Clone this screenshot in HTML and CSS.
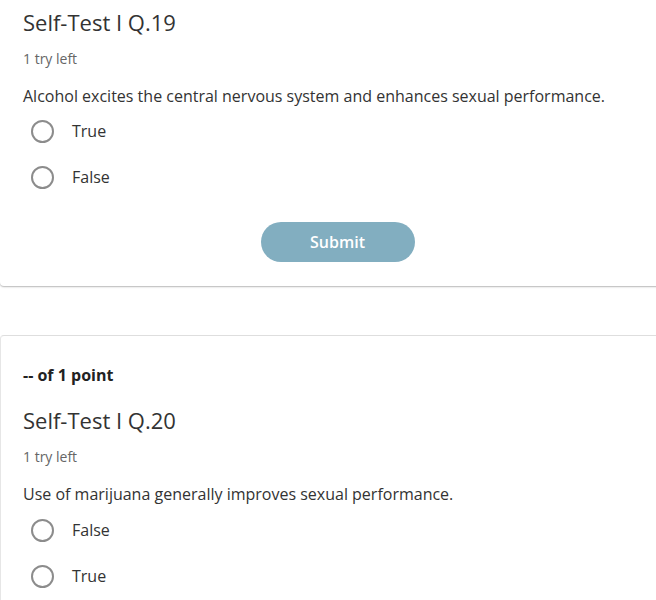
FILE: index.html
```html
<!DOCTYPE html>
<html>
<head>
<meta charset="utf-8">
<link rel="stylesheet" href="styles.css">
</head>
<body>
<div class="page">
  <section class="card card-first">
    <h2 class="title">Self-Test I Q.19</h2>
    <div class="tries">1 try left</div>
    <p class="question">Alcohol excites the central nervous system and enhances sexual performance.</p>
    <ul class="options">
      <li class="option"><span class="radio"></span><span class="label">True</span></li>
      <li class="option"><span class="radio"></span><span class="label">False</span></li>
    </ul>
    <div class="actions"><button class="submit">Submit</button></div>
  </section>
  <section class="card card-second">
    <div class="points">-- of 1 point</div>
    <h2 class="title title-second">Self-Test I Q.20</h2>
    <div class="tries">1 try left</div>
    <p class="question">Use of marijuana generally improves sexual performance.</p>
    <ul class="options options-second">
      <li class="option"><span class="radio"></span><span class="label">False</span></li>
      <li class="option"><span class="radio"></span><span class="label">True</span></li>
    </ul>
  </section>
</div>
</body>
</html>
```
FILE: styles.css
```css
html, body {
  margin: 0;
  padding: 0;
  background: #fff;
  overflow: hidden;
}
body {
  font-family: "Open Sans", "Liberation Sans", sans-serif;
  color: #333;
}
.page {
  width: 668px;
}
.card {
  background: #fff;
  border-radius: 4px;
  padding-left: 23px;
}
.card-first {
  padding-top: 7px;
  padding-bottom: 24px;
  border-radius: 0 0 4px 4px;
  box-shadow: 0 1px 2px rgba(0,0,0,0.22), 0 1px 1px rgba(0,0,0,0.08);
}
.card-second {
  margin-top: 49px;
  border-top: 1px solid #dedede;
  border-left: 1px solid #e6e6e6;
  padding-left: 22px;
  padding-top: 28px;
  padding-bottom: 20px;
}
.title {
  margin: 0;
  font-size: 22px;
  line-height: 30px;
  font-weight: 400;
  color: #333;
}
.title-second {
  margin-top: 19px;
}
.tries {
  margin-top: 13px;
  font-size: 14px;
  line-height: 18px;
  color: #666;
}
.question {
  margin: 17px 0 0;
  font-size: 16px;
  line-height: 22px;
  color: #333;
}
.points {
  font-size: 16px;
  line-height: 22px;
  font-weight: 700;
  color: #222;
}
.options {
  list-style: none;
  margin: 1px 0 0;
  padding: 0;
}
.options-second {
  margin-top: 2px;
}
.option {
  display: flex;
  align-items: center;
  height: 46px;
}
.radio {
  box-sizing: border-box;
  width: 23px;
  height: 23px;
  border: 2px solid #8c8c8c;
  border-radius: 50%;
  margin-left: 8px;
  margin-right: 18px;
}
.label {
  font-size: 16px;
  color: #333;
}
.actions {
  display: flex;
  justify-content: center;
  margin-top: 22px;
  width: 629px;
}
.submit {
  width: 154px;
  height: 40px;
  border: none;
  border-radius: 20px;
  background: #82aec0;
  color: #fff;
  font-family: "Open Sans", "Liberation Sans", sans-serif;
  font-size: 16px;
  font-weight: 600;
  padding: 0;
}
```
